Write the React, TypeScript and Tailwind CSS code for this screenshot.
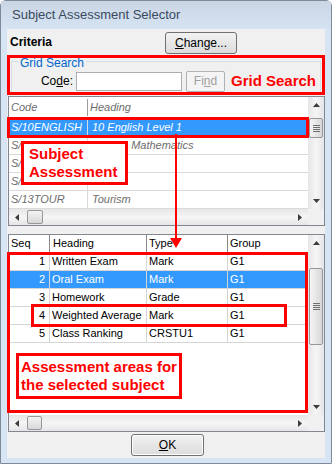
import React from "react";

const font = "font-['Liberation_Sans',Arial,sans-serif]";

function Arrow({ dir }: { dir: "up" | "down" | "left" | "right" }) {
  const pts = {
    up: "0,4 7,4 3.5,0",
    down: "0,0 7,0 3.5,4",
    left: "4,0 4,7 0,3.5",
    right: "0,0 0,7 4,3.5",
  }[dir];
  const vertical = dir === "up" || dir === "down";
  return (
    <svg width={vertical ? 7 : 4} height={vertical ? 4 : 7} viewBox={vertical ? "0 0 7 4" : "0 0 4 7"}>
      <polygon points={pts} fill="#3c3c3c" />
    </svg>
  );
}

function Grip() {
  return (
    <div className="flex flex-col gap-[1px]">
      <div className="h-[1px] w-[7px] bg-[#6f6f6f]" />
      <div className="h-[1px] w-[7px] bg-[#6f6f6f]" />
      <div className="h-[1px] w-[7px] bg-[#6f6f6f]" />
      <div className="h-[1px] w-[7px] bg-[#6f6f6f]" />
    </div>
  );
}

function VScroll({ thumbTop, thumbH }: { thumbTop: number; thumbH: number }) {
  return (
    <div className="flex w-[16px] flex-col items-center bg-gradient-to-r from-[#e6e6e6] via-[#f5f5f5] to-[#e6e6e6]">
      <div className="flex h-[16px] w-full items-center justify-center">
        <Arrow dir="up" />
      </div>
      <div className="relative w-full flex-1">
        <div
          className="absolute left-[1px] right-[1px] flex items-center justify-center rounded-[2px] border border-[#979797] bg-gradient-to-r from-[#f4f4f4] to-[#d8d8d8]"
          style={{ top: thumbTop, height: thumbH }}
        >
          <Grip />
        </div>
      </div>
      <div className="flex h-[16px] w-full items-center justify-center">
        <Arrow dir="down" />
      </div>
    </div>
  );
}

function HScroll({ thumbLeft, thumbW }: { thumbLeft: number; thumbW: number }) {
  return (
    <div className="flex h-[16px] flex-1 flex-row items-center bg-gradient-to-b from-[#e6e6e6] via-[#f5f5f5] to-[#e6e6e6]">
      <div className="flex h-full w-[16px] items-center justify-center">
        <Arrow dir="left" />
      </div>
      <div className="relative h-full flex-1">
        <div
          className="absolute top-[1px] bottom-[1px] rounded-[2px] border border-[#979797] bg-gradient-to-b from-[#f4f4f4] to-[#d8d8d8]"
          style={{ left: thumbLeft, width: thumbW }}
        />
      </div>
      <div className="flex h-full w-[16px] items-center justify-center">
        <Arrow dir="right" />
      </div>
    </div>
  );
}

const subjects = [
  ["S/10ENGLISH", "10 English Level 1"],
  ["S/10MATHS", "10 Gen Mathematics"],
  ["S/10ART", "10 Art"],
  ["S/11ART", "11 Art"],
  ["S/13TOUR", "Tourism"],
];

const areas = [
  ["1", "Written Exam", "Mark", "G1"],
  ["2", "Oral Exam", "Mark", "G1"],
  ["3", "Homework", "Grade", "G1"],
  ["4", "Weighted Average", "Mark", "G1"],
  ["5", "Class Ranking", "CRSTU1", "G1"],
];

export default function App() {
  return (
    <div className={`relative h-[464px] w-[332px] overflow-hidden bg-white ${font} text-[11px] text-black`}>
      <div className="flex h-[464px] w-[332px] flex-col rounded-t-[6px] border border-[#7d8a99] bg-[#d6e4f4]">
        {/* title bar */}
        <div className="flex h-[28px] items-center bg-gradient-to-b from-[#cbd6e4] to-[#d5e3f3] pl-[11px] text-[13px] text-[#3a4a5e]">
          Subject Assessment Selector
        </div>

        {/* client area */}
        <div className="mx-[6px] flex h-[429px] w-[318px] flex-col bg-[#f0f0f0]">
          {/* criteria row */}
          <div className="flex h-[26px] flex-row items-center justify-between pl-[3px] pr-[88px]">
            <span className="text-[12px] font-bold">Criteria</span>
            <button className="mt-[2px] h-[22px] w-[72px] rounded-[3px] border border-[#707070] bg-gradient-to-b from-[#f2f2f2] to-[#dcdcdc] text-[12px]">
              <span className="underline">C</span>hange...
            </button>
          </div>

          {/* grid search */}
          <div className="h-[40px] overflow-hidden border-[3px] border-[#ff0000]">
            <div className="relative mx-[1px] mt-[3px] h-[40px] border border-[#d5dfe5] pt-[8px]">
              <span className="absolute -top-[6px] left-[6px] bg-[#f0f0f0] px-[2px] text-[12px] leading-[14px] text-[#0066cc]">
                Grid Search
              </span>
              <div className="flex flex-row items-center">
                <span className="w-[64px] pr-[3px] text-right text-[12px]">
                  Co<span className="underline">d</span>e:
                </span>
                <div className="h-[19px] w-[106px] border border-[#abadb3] bg-white" />
                <button className="ml-[4px] h-[21px] w-[39px] rounded-[2px] border border-[#adb2b5] bg-[#f4f4f4] text-[12px] text-[#a0a0a0]">
                  Fi<span className="underline">n</span>d
                </button>
                <span className="ml-[6px] text-[15px] font-bold text-[#ff0000]">Grid Search</span>
              </div>
            </div>
          </div>

          {/* subject grid */}
          <div className="ml-[1px] mt-[1px] flex h-[130px] flex-col border border-[#828790] bg-white">
            <div className="flex flex-1 flex-row">
              <div className="flex flex-1 flex-col whitespace-nowrap italic text-[#6d6d6d]">
                <div className="flex h-[22px] flex-row items-center border-b border-[#e3e3e3]">
                  <div className="w-[79px] border-r border-[#9b9b9b] pl-[2px]">Code</div>
                  <div className="pl-[2px]">Heading</div>
                </div>
                {subjects.map((s, i) => (
                  <div
                    key={s[0]}
                    className={`flex h-[18px] flex-row items-center border-b border-[#dadada] ${
                      i === 0 ? "bg-[#3399ff] text-white" : ""
                    }`}
                  >
                    <div className="flex h-full w-[79px] items-center border-r border-[#dadada] pl-[2px]">{s[0]}</div>
                    <div className="pl-[4px]">{s[1]}</div>
                  </div>
                ))}
              </div>
              <VScroll thumbTop={5} thumbH={20} />
            </div>
            <div className="flex flex-row">
              <HScroll thumbLeft={2} thumbW={16} />
              <div className="h-[16px] w-[16px] bg-[#f0f0f0]" />
            </div>
          </div>

          {/* assessment grid */}
          <div className="ml-[1px] mt-[8px] flex h-[198px] flex-col border border-[#828790] bg-white">
            <div className="flex flex-1 flex-row">
              <div className="flex flex-1 flex-col whitespace-nowrap text-[11px]">
                <div className="flex h-[18px] flex-row items-center border-b border-[#d5d5d5]">
                  <div className="w-[41px] border-r border-[#8a8a8a] pl-[2px]">Seq</div>
                  <div className="w-[97px] border-r border-[#8a8a8a] pl-[3px]">Heading</div>
                  <div className="w-[81px] border-r border-[#8a8a8a] pl-[2px]">Type</div>
                  <div className="pl-[2px]">Group</div>
                </div>
                {areas.map((a, i) => (
                  <div
                    key={a[0]}
                    className={`flex h-[18px] flex-row items-center border-b border-[#d5d5d5] ${
                      i === 1 ? "bg-[#3399ff] text-white" : ""
                    }`}
                  >
                    <div className="flex h-full w-[41px] items-center justify-end border-r border-[#d5d5d5] pr-[4px]">
                      {a[0]}
                    </div>
                    <div className="flex h-full w-[97px] items-center border-r border-[#d5d5d5] pl-[2px]">{a[1]}</div>
                    <div className="flex h-full w-[81px] items-center border-r border-[#d5d5d5] pl-[2px]">{a[2]}</div>
                    <div className="pl-[2px]">{a[3]}</div>
                  </div>
                ))}
              </div>
              <VScroll thumbTop={17} thumbH={77} />
            </div>
            <div className="flex flex-row">
              <HScroll thumbLeft={2} thumbW={15} />
              <div className="h-[16px] w-[16px] bg-[#f0f0f0]" />
            </div>
          </div>

          {/* ok */}
          <div className="flex flex-1 items-center justify-center pl-[3px]">
            <button className="h-[22px] w-[73px] rounded-[3px] border border-[#707070] bg-gradient-to-b from-[#f2f2f2] to-[#dcdcdc] text-[12px] shadow-[inset_0_0_0_1px_#ffffff]">
              <span className="underline">O</span>K
            </button>
          </div>
        </div>
      </div>

      {/* annotations */}
      <div className="absolute left-[7px] top-[117px] h-[21px] w-[302px] border-[3px] border-[#ff0000]" />
      <div className="absolute left-[21px] top-[141px] flex h-[44px] w-[107px] flex-col justify-center border-[3px] border-[#ff0000] bg-white pl-[5px] text-[15px] font-bold leading-[18px] text-[#ff0000]">
        <span>Subject</span>
        <span>Assessment</span>
      </div>
      <div className="absolute left-[175px] top-[134px] h-[106px] w-[2px] bg-[#ff0000]" />
      <svg className="absolute left-[170px] top-[238px]" width="12" height="10" viewBox="0 0 12 10">
        <polygon points="0,0 12,0 6,10" fill="#ff0000" />
      </svg>
      <div className="absolute left-[7px] top-[252px] h-[161px] w-[301px] border-[3px] border-[#ff0000]" />
      <div className="absolute left-[31px] top-[304px] h-[23px] w-[256px] border-[3px] border-[#ff0000]" />
      <div className="absolute left-[16px] top-[353px] flex h-[46px] w-[166px] flex-col justify-center border-[3px] border-[#ff0000] bg-white pl-[2px] text-[15px] font-bold leading-[18px] text-[#ff0000]">
        <span>Assessment areas for</span>
        <span>the selected subject</span>
      </div>
    </div>
  );
}
